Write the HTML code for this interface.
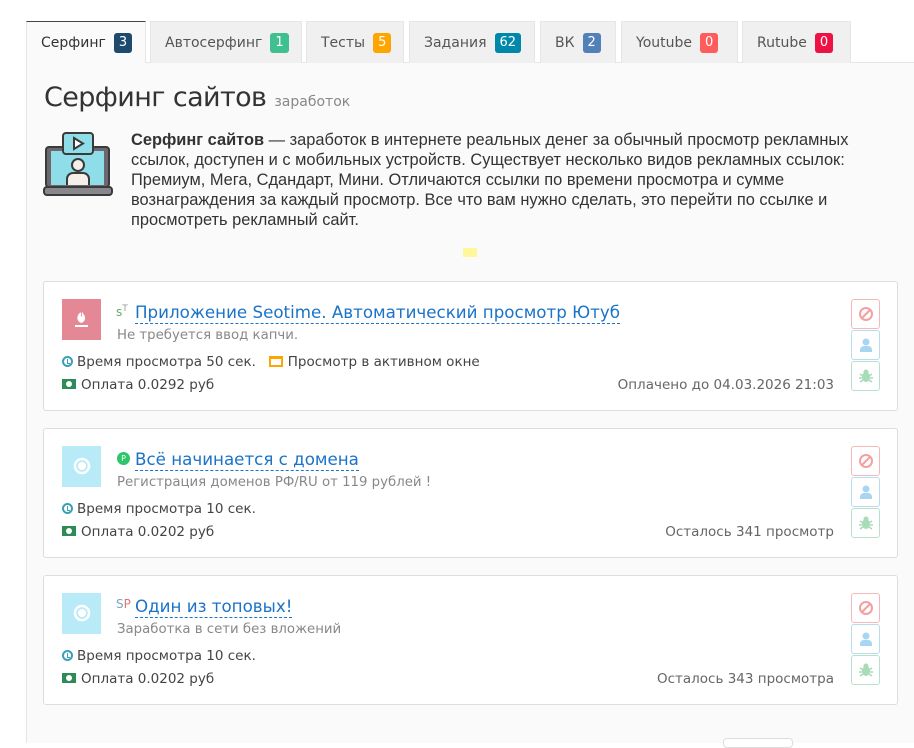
<!DOCTYPE html>
<html><head><meta charset="utf-8"><style>
*{box-sizing:border-box;margin:0;padding:0}
body{width:914px;height:743px;background:#fff;font-family:"DejaVu Sans","Liberation Sans",sans-serif;position:relative;overflow:hidden;color:#333}
.tab{position:absolute;top:21px;height:42px;background:#f0f0f0;border:1px solid #e6e6e6;border-bottom:none;font-size:14px;color:#555;line-height:42px;padding-left:14px;white-space:nowrap}
.tab.act{background:#fafafa;border-top:1px solid #444;color:#333}
.b{display:inline-block;color:#fff;font-size:13px;line-height:20px;height:20px;padding:0 5px;border-radius:3px;margin-left:8px;vertical-align:1px}
.panel{position:absolute;left:26px;top:62px;right:0;bottom:0;background:#fafafa;border-left:1px solid #e6e6e6;border-top:1px solid #e6e6e6}
h1{position:absolute;left:44px;top:82px;font-size:27px;color:#333;font-family:"DejaVu Sans",sans-serif;font-weight:normal;letter-spacing:-0.6px}
h1 small{font-size:14px;color:#888;letter-spacing:0}
.desc{position:absolute;left:131px;top:130px;width:760px;font-family:"Liberation Sans",Arial,sans-serif;font-size:16.4px;line-height:20px;color:#333}
.card{position:absolute;left:43px;width:855px;height:130px;background:#fff;border:1px solid #ddd;border-radius:3px}
.img{position:absolute;left:18px;top:17px;width:39px;height:41px}
.ttl{position:absolute;left:91px;top:19px;font-size:16.7px;color:#1a73c8;border-bottom:1px dashed #1a73c8;line-height:22px;white-space:nowrap}
.pre{position:absolute;left:72px;top:22px;font-size:12px}
.sub{position:absolute;left:73px;top:46px;font-size:13.3px;color:#888;white-space:nowrap}
.l1{position:absolute;left:18px;top:72px;font-size:13.5px;color:#444;white-space:nowrap}
.l2{position:absolute;left:18px;top:95px;font-size:13.5px;color:#444;white-space:nowrap}
.rt{position:absolute;right:63px;top:95px;font-size:13.5px;color:#666;white-space:nowrap}
.btn{position:absolute;left:807px;width:29px;height:30px;border:1px solid;border-radius:3px;background:#fff;display:flex;align-items:center;justify-content:center}
.clk{display:inline-block;width:11px;height:11px;border:2px solid #3a9fb8;border-radius:50%;vertical-align:-1px;margin-right:4px;position:relative}
.clk:after{content:"";position:absolute;left:3px;top:1px;width:2px;height:4px;border-left:1.5px solid #3a9fb8;border-bottom:1.5px solid #3a9fb8}
.money{display:inline-block;width:14px;height:10px;background:#2e8b57;border:1px solid #2e8b57;vertical-align:0;margin-right:5px;position:relative}
.money:after{content:"";position:absolute;left:3px;top:1px;width:6px;height:6px;background:#fff;border-radius:50%}
.bset .btn:nth-child(1){top:0;border-color:#f3b8b8}.bset .btn:nth-child(2){top:31px;border-color:#b5dcef}.bset .btn:nth-child(3){top:62px;border-color:#b8e0cc}.bset{position:absolute;left:44px;width:0;height:0}
</style></head><body>
<div class="panel"></div>
<div class="tab act" style="left:26px;width:120px">Серфинг<span class="b" style="background:#1e4a6e">3</span></div>
<div class="tab" style="left:150px;width:152px">Автосерфинг<span class="b" style="background:#40c090">1</span></div>
<div class="tab" style="left:306px;width:98px">Тесты<span class="b" style="background:#ffa500">5</span></div>
<div class="tab" style="left:409px;width:126px">Задания<span class="b" style="background:#0088aa">62</span></div>
<div class="tab" style="left:540px;width:76px">ВК<span class="b" style="background:#5181b8">2</span></div>
<div class="tab" style="left:621px;width:117px">Youtube<span class="b" style="background:#ff5c5c">0</span></div>
<div class="tab" style="left:742px;width:109px">Rutube<span class="b" style="background:#ee1144">0</span></div>
<h1>Серфинг сайтов <small>заработок</small></h1>
<svg style="position:absolute;left:43px;top:130px" width="71" height="70" viewBox="0 0 71 70">
<rect x="3" y="17" width="63" height="40" rx="3" fill="#6c6870" stroke="#3a3a3a" stroke-width="2"/>
<rect x="8" y="21" width="53" height="34" fill="#8fdde8"/>
<rect x="1" y="57" width="68" height="8" rx="3" fill="#8a868d" stroke="#3a3a3a" stroke-width="2"/>
<rect x="20" y="3" width="30" height="21" rx="3" fill="#8fdde8" stroke="#3a3a3a" stroke-width="2"/>
<path d="M31 8 L40 13.5 L31 19 Z" fill="#fff" stroke="#3a3a3a" stroke-width="2"/>
<circle cx="35" cy="35" r="6" fill="#f4efe9" stroke="#3a3a3a" stroke-width="2"/>
<path d="M24 55 v-6 a6 6 0 0 1 6 -6 h10 a6 6 0 0 1 6 6 v6" fill="#f4efe9" stroke="#3a3a3a" stroke-width="2"/>
</svg>
<div class="desc"><b>Серфинг сайтов</b> — заработок в интернете реальных денег за обычный просмотр рекламных ссылок, доступен и с мобильных устройств. Существует несколько видов рекламных ссылок: Премиум, Мега, Сдандарт, Мини. Отличаются ссылки по времени просмотра и сумме вознаграждения за каждый просмотр. Все что вам нужно сделать, это перейти по ссылке и просмотреть рекламный сайт.</div>
<div style="position:absolute;left:463px;top:248px;width:14px;height:9px;background:#fff89a"></div>

<div class="card" style="top:281px">
<div class="img" style="background:#e48896"><svg width="39" height="41"><path d="M19 14 c-4 4 -3 7 0 9 c-2 -3 2 -4 2 -7 c2 3 1 6 -2 7 M13 27 h13" stroke="#fff" stroke-width="2" fill="#fff"/></svg></div>
<div class="pre"><span style="color:#6a6">s</span><sup style="font-size:9px;color:#999">T</sup></div>
<div class="ttl">Приложение Seotime. Автоматический просмотр Ютуб</div>
<div class="sub">Не требуется ввод капчи.</div>
<div class="l1"><span class="clk"></span>Время просмотра 50 сек. &nbsp;&nbsp;<span style="display:inline-block;width:14px;height:11px;border:2px solid #ffa500;border-top-width:3px;margin-right:5px;vertical-align:-1px"></span>Просмотр в активном окне</div>
<div class="l2"><span class="money"></span>Оплата 0.0292 руб</div>
<div class="rt">Оплачено до 04.03.2026 21:03</div>
</div>

<div class="card" style="top:428px">
<div class="img" style="background:#b8ebf7"><svg width="39" height="41"><circle cx="20" cy="20" r="7" fill="none" stroke="#fff" stroke-width="2.5"/><circle cx="20" cy="20" r="4" fill="#fff"/></svg></div>
<div class="pre" style="left:73px;top:21px"><span style="display:inline-block;width:13px;height:13px;border-radius:50%;background:#2ec66a;color:#fff;font-size:8px;text-align:center;line-height:13px">P</span></div>
<div class="ttl">Всё начинается с домена</div>
<div class="sub">Регистрация доменов РФ/RU от 119 рублей !</div>
<div class="l1"><span class="clk"></span>Время просмотра 10 сек.</div>
<div class="l2"><span class="money"></span>Оплата 0.0202 руб</div>
<div class="rt">Осталось 341 просмотр</div>
</div>

<div class="card" style="top:575px">
<div class="img" style="background:#b8ebf7"><svg width="39" height="41"><circle cx="20" cy="20" r="7" fill="none" stroke="#fff" stroke-width="2.5"/><circle cx="20" cy="20" r="4" fill="#fff"/></svg></div>
<div class="pre" style="font-size:12px;top:21px"><span style="color:#7ab">S</span><span style="color:#d77">P</span></div>
<div class="ttl">Один из топовых!</div>
<div class="sub">Заработка в сети без вложений</div>
<div class="l1"><span class="clk"></span>Время просмотра 10 сек.</div>
<div class="l2"><span class="money"></span>Оплата 0.0202 руб</div>
<div class="rt">Осталось 343 просмотра</div>
</div>

<div class="bset" style="top:299px">
<div class="btn"><svg width="16" height="16"><circle cx="8" cy="8" r="6" fill="none" stroke="#f5a0a0" stroke-width="2"/><path d="M4 12 L12 4" stroke="#f5a0a0" stroke-width="2"/></svg></div>
<div class="btn"><svg width="16" height="16"><circle cx="8" cy="5" r="3.5" fill="#a8d6f2"/><path d="M2 15 v-2 a4 4 0 0 1 4 -4 h4 a4 4 0 0 1 4 4 v2z" fill="#a8d6f2"/></svg></div>
<div class="btn"><svg width="16" height="16"><ellipse cx="8" cy="9" rx="4" ry="5" fill="#a8dcb8"/><circle cx="8" cy="4" r="2.5" fill="#a8dcb8"/><path d="M2 6 l3 2 M14 6 l-3 2 M1 10 h3 M15 10 h-3 M2 14 l3 -2 M14 14 l-3 -2" stroke="#a8dcb8" stroke-width="1.5"/></svg></div>
</div>
<div class="bset" style="top:446px">
<div class="btn"><svg width="16" height="16"><circle cx="8" cy="8" r="6" fill="none" stroke="#f5a0a0" stroke-width="2"/><path d="M4 12 L12 4" stroke="#f5a0a0" stroke-width="2"/></svg></div>
<div class="btn"><svg width="16" height="16"><circle cx="8" cy="5" r="3.5" fill="#a8d6f2"/><path d="M2 15 v-2 a4 4 0 0 1 4 -4 h4 a4 4 0 0 1 4 4 v2z" fill="#a8d6f2"/></svg></div>
<div class="btn"><svg width="16" height="16"><ellipse cx="8" cy="9" rx="4" ry="5" fill="#a8dcb8"/><circle cx="8" cy="4" r="2.5" fill="#a8dcb8"/><path d="M2 6 l3 2 M14 6 l-3 2 M1 10 h3 M15 10 h-3 M2 14 l3 -2 M14 14 l-3 -2" stroke="#a8dcb8" stroke-width="1.5"/></svg></div>
</div>
<div class="bset" style="top:593px">
<div class="btn"><svg width="16" height="16"><circle cx="8" cy="8" r="6" fill="none" stroke="#f5a0a0" stroke-width="2"/><path d="M4 12 L12 4" stroke="#f5a0a0" stroke-width="2"/></svg></div>
<div class="btn"><svg width="16" height="16"><circle cx="8" cy="5" r="3.5" fill="#a8d6f2"/><path d="M2 15 v-2 a4 4 0 0 1 4 -4 h4 a4 4 0 0 1 4 4 v2z" fill="#a8d6f2"/></svg></div>
<div class="btn"><svg width="16" height="16"><ellipse cx="8" cy="9" rx="4" ry="5" fill="#a8dcb8"/><circle cx="8" cy="4" r="2.5" fill="#a8dcb8"/><path d="M2 6 l3 2 M14 6 l-3 2 M1 10 h3 M15 10 h-3 M2 14 l3 -2 M14 14 l-3 -2" stroke="#a8dcb8" stroke-width="1.5"/></svg></div>
</div>
<div style="position:absolute;left:723px;top:738px;width:70px;height:10px;border:1px solid #ddd;border-radius:4px;background:#fff"></div>
</body></html>
